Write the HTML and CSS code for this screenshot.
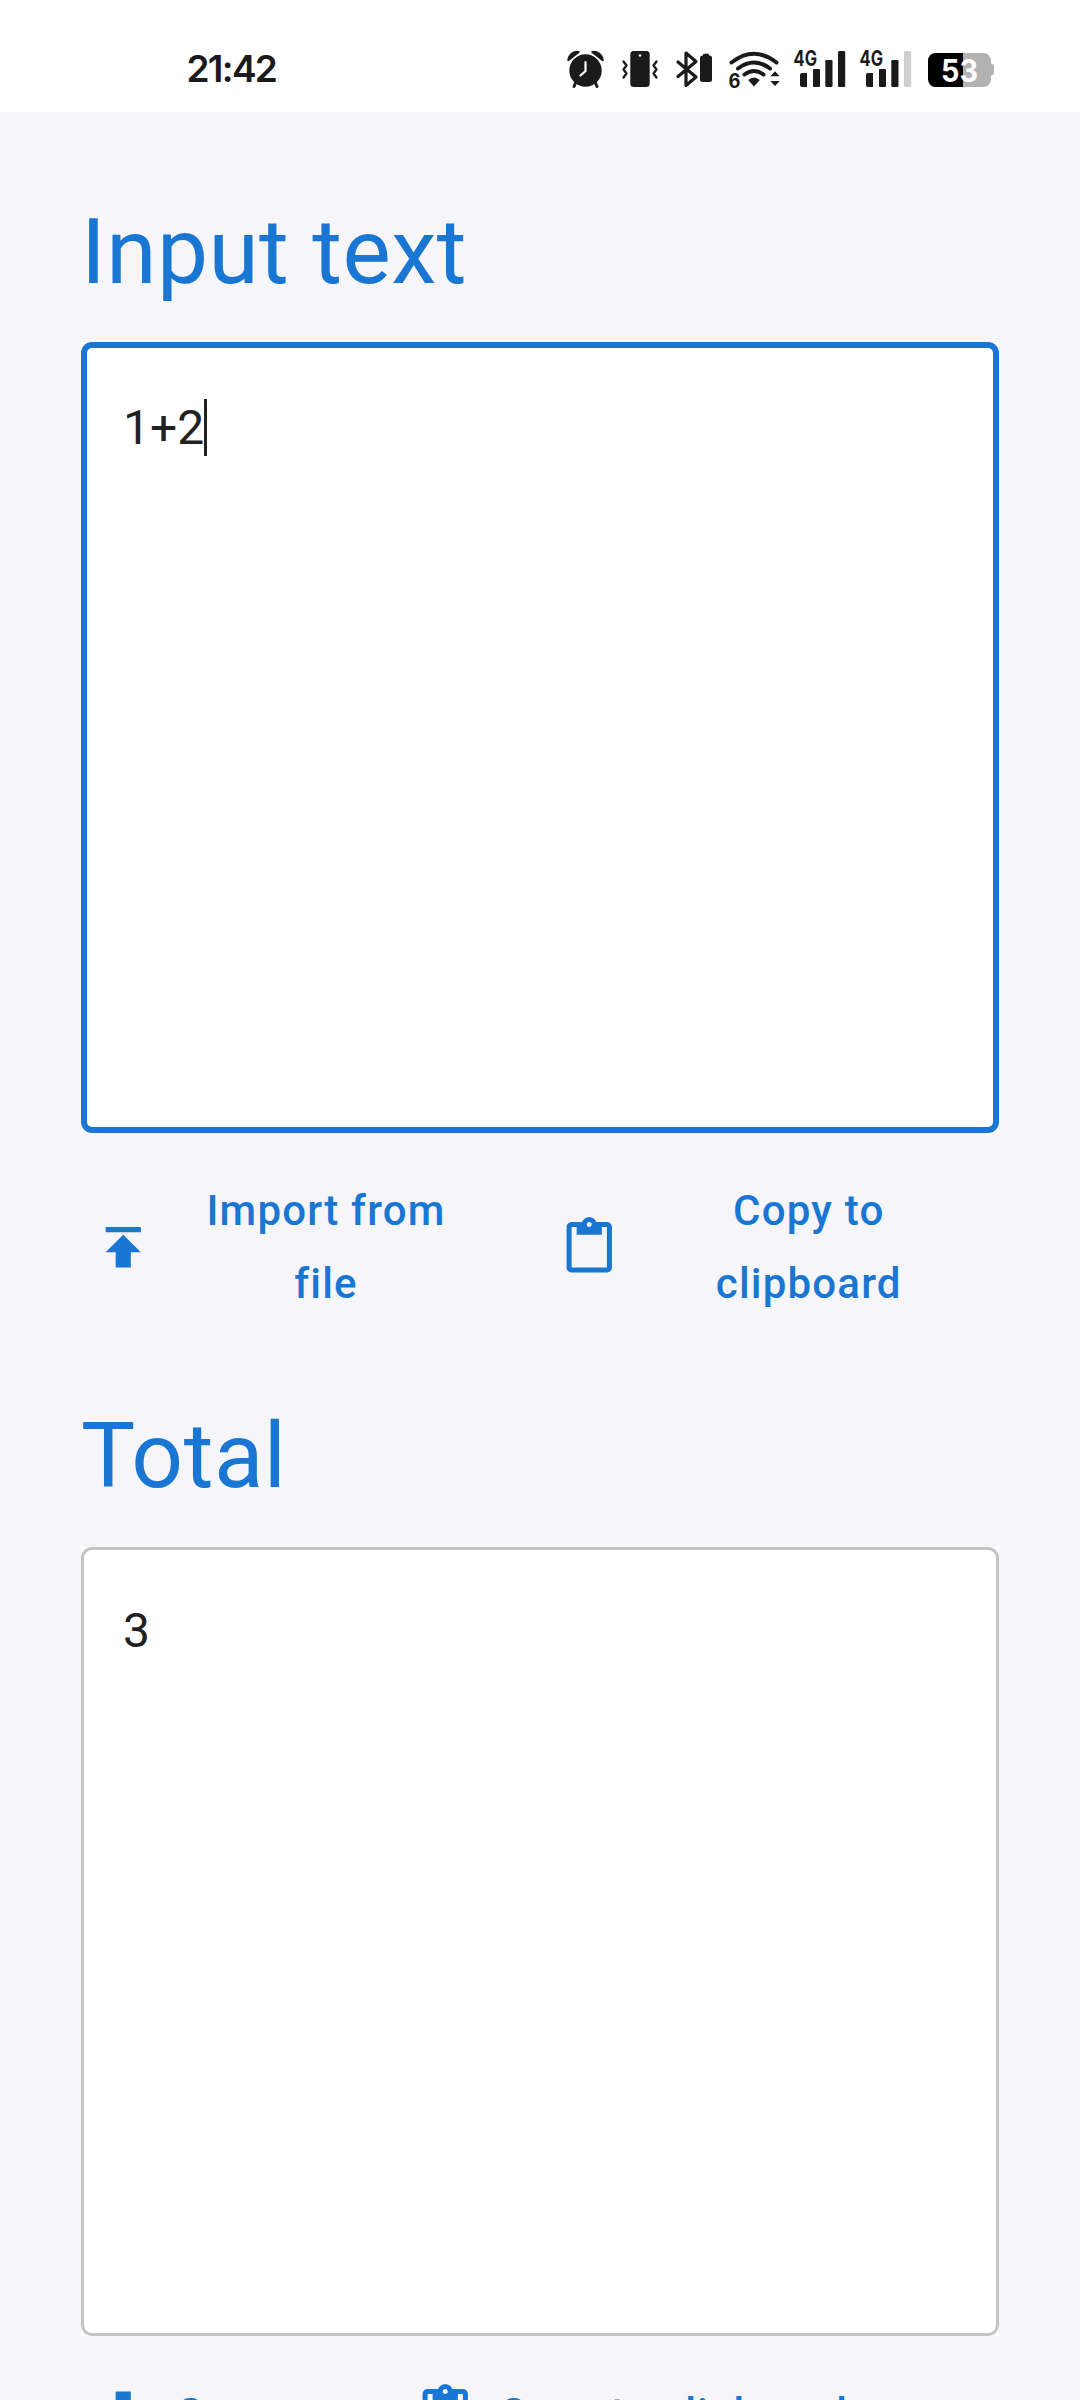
FILE: index.html
```html
<!DOCTYPE html>
<html lang="en">
<head>
<meta charset="utf-8">
<title>Total</title>
<link rel="stylesheet" href="styles.css">
</head>
<body>
<header class="status">
  <span class="time">21:42</span>
  <svg class="status-icons" width="440" height="50" viewBox="560 43 440 50" fill="#1a1a1a">
    <!-- alarm -->
    <circle cx="585.5" cy="70.5" r="16.2"/>
    <path d="M568.3 60.200a9 9 0 0 1 10.500-8.200zM602.700 60.200a9 9 0 0 0-10.500-8.200z" stroke="#1a1a1a" stroke-width="2" stroke-linejoin="round"/>
    <path d="M576 82l-2 4.500M595 82l2 4.500" stroke="#1a1a1a" stroke-width="3" stroke-linecap="round"/>
    <path d="M585.500 62v9l-5 4.500" fill="none" stroke="#fff" stroke-width="2.200" stroke-linecap="round"/>
    <!-- vibrate -->
    <rect x="630.300" y="51" width="19.400" height="36" rx="3.500"/>
    <circle cx="640" cy="55.500" r="1.300" fill="#fff"/>
    <path d="M623.500 61.500l3 4-3 4 3 4-3 4M656.500 61.500l-3 4 3 4-3 4 3 4" fill="none" stroke="#1a1a1a" stroke-width="2.300" stroke-linecap="round" stroke-linejoin="round"/>
    <!-- bluetooth -->
    <path d="M678 62l18 15-10 8.500V53l10 8.500-18 15" fill="none" stroke="#1a1a1a" stroke-width="3.200" stroke-linecap="round" stroke-linejoin="round"/>
    <rect x="700" y="55.500" width="12" height="26.500" rx="2.500"/>
    <rect x="703" y="53.800" width="6" height="4" rx="1"/>
    <!-- wifi -->
    <path d="M731.500 62.500q22.500-17.500 45 0M738 68.500q16-12 32 0M744.500 74.500q9.500-7 19 0" fill="none" stroke="#1a1a1a" stroke-width="4" stroke-linecap="round"/>
    <path d="M748.200 80q5.800-5 11.600 0l-5.800 6.500z"/>
    <path d="M775 71.200l4.700 5h-9.400zM775 86l4.700-5h-9.400z"/>
    <text class="glyph" x="728.500" y="87.500" font-size="20" textLength="12" lengthAdjust="spacingAndGlyphs">6</text>
    <!-- mobile signal, first line -->
    <text class="glyph" x="793.500" y="65.800" font-size="21.500" textLength="23.500" lengthAdjust="spacingAndGlyphs">4G</text>
    <path d="M800 75a2 2 0 0 1 2-2h5v14h-5a2 2 0 0 1-2-2z"/>
    <rect x="813" y="69" width="7" height="18" rx="1"/>
    <rect x="825.300" y="60" width="7.200" height="27" rx="1.300"/>
    <rect x="838" y="51" width="7.200" height="36" rx="1.300"/>
    <!-- mobile signal, second line -->
    <text class="glyph" x="859.500" y="65.800" font-size="21.500" textLength="23.500" lengthAdjust="spacingAndGlyphs">4G</text>
    <path d="M866 75a2 2 0 0 1 2-2h5v14h-5a2 2 0 0 1-2-2z"/>
    <rect x="879" y="69" width="7" height="18" rx="1"/>
    <rect x="891.300" y="60" width="7.200" height="27" rx="1.300"/>
    <rect x="904" y="51" width="7.200" height="36" rx="1.300" fill="#d0d0d0"/>
    <!-- battery -->
    <path d="M963 53h20.500a7.500 7.500 0 0 1 7.500 7.500v3q3 .5 3 3v6q0 2.500-3 3v4a7.500 7.500 0 0 1-7.500 7.500H963z" fill="#b2b2b2"/>
    <path d="M963 53h-27.500a7.500 7.500 0 0 0-7.500 7.500v19a7.500 7.500 0 0 0 7.500 7.500H963z" fill="#000"/>
    <text class="glyph" x="941" y="82" font-size="31" fill="#fff" textLength="37" lengthAdjust="spacingAndGlyphs">53</text>
  </svg>
</header>
<main class="page">
  <h1 class="heading">Input text</h1>
  <div class="field field-active"><div class="field-box">1+2<span class="caret"></span></div></div>
  <div class="actions">
    <div class="button">
      <svg class="icon" viewBox="0 0 24 24"><path d="M5 4v2h14V4H5zm0 10h4v6h6v-6h4l-7-7-7 7z"/></svg>
      <span class="label">Import from<br>file</span>
    </div>
    <div class="button">
      <svg class="icon" viewBox="0 0 24 24"><path d="M19 2h-4.180C14.400.840 13.300 0 12 0c-1.300 0-2.400.840-2.820 2H5c-1.100 0-2 .9-2 2v16c0 1.100.9 2 2 2h14c1.100 0 2-.9 2-2V4c0-1.100-.9-2-2-2zm-7 0c.55 0 1 .45 1 1s-.45 1-1 1-1-.45-1-1 .45-1 1-1zm7 18H5V4h2v3h10V4h2v16z"/></svg>
      <span class="label">Copy to<br>clipboard</span>
    </div>
  </div>
  <h1 class="heading heading-total">Total</h1>
  <div class="field field-total"><div class="field-box">3</div></div>
  <div class="actions actions-total">
    <div class="button">
      <svg class="icon" viewBox="0 0 24 24"><path d="M19 9h-4V3H9v6H5l7 7 7-7zM5 18v2h14v-2H5z"/></svg>
      <span class="label">Save</span>
    </div>
    <div class="button">
      <svg class="icon" viewBox="0 0 24 24"><path d="M19 2h-4.180C14.400.840 13.300 0 12 0c-1.300 0-2.400.840-2.820 2H5c-1.100 0-2 .9-2 2v16c0 1.100.9 2 2 2h14c1.100 0 2-.9 2-2V4c0-1.100-.9-2-2-2zm-7 0c.55 0 1 .45 1 1s-.45 1-1 1-1-.45-1-1 .45-1 1-1zm7 18H5V4h2v3h10V4h2v16z"/></svg>
      <span class="label">Copy to clipboard</span>
    </div>
  </div>
</main>
</body>
</html>
```
FILE: styles.css
```css
* { box-sizing: border-box; }
body {
  margin: 0;
  height: 2400px;
  overflow: hidden;
  background: #f5f5fa;
  font-family: Roboto, sans-serif;
}
.status {
  display: flex;
  justify-content: space-between;
  height: 112px;
  padding: 43px 80px 0 186.5px;
  background: #fff;
}
.time {
  font: 600 37px/52px Inter, sans-serif;
  letter-spacing: -1.7px;
  color: #1a1a1a;
}
.glyph { font-family: Inter, sans-serif; font-weight: 700; }
.page { padding: 87px 81px 0; }
.heading {
  margin: 0;
  height: 143px;
  font-size: 91px;
  font-weight: 400;
  line-height: 107px;
  letter-spacing: 0.45px;
  color: #1976d2;
}
.heading-total { line-height: 104px; }
.field {
  height: 791px;
  background: #fff;
}
.field-total { height: 789px; }
.field-box {
  display: flex;
  align-items: flex-start;
  height: 100%;
  padding: 52px 39px;
  border: 3px solid #c4c4c4;
  border-radius: 11px;
  font-size: 48px;
  line-height: 57px;
  color: #212121;
}
.field-active .field-box {
  padding: 51px 36px;
  border: 6px solid #1976d2;
}
.caret {
  width: 3px;
  height: 57px;
  background: #212121;
}
.actions {
  display: grid;
  grid-template-columns: 418.5px 452px;
  column-gap: 47.5px;
  height: 271px;
  padding-top: 40px;
}
.button {
  display: flex;
  align-items: center;
  height: 148px;
  padding: 0 25px 0 12px;
  color: #1976d2;
}
.icon {
  flex: none;
  width: 60.5px;
  height: 60.5px;
  margin-top: 1px;
  fill: #1976d2;
}
.label {
  flex: 1;
  padding-left: 24px;
  font-size: 42px;
  font-weight: 500;
  line-height: 73px;
  letter-spacing: 1.2px;
  text-align: center;
}
.actions-total {
  grid-template-columns: 274px 596px;
  height: 64px;
  padding-top: 0;
}
.actions-total .button {
  height: 73px;
  margin-top: 41px;
}
.actions-total .label {
  text-align: left;
  white-space: nowrap;
}
```
